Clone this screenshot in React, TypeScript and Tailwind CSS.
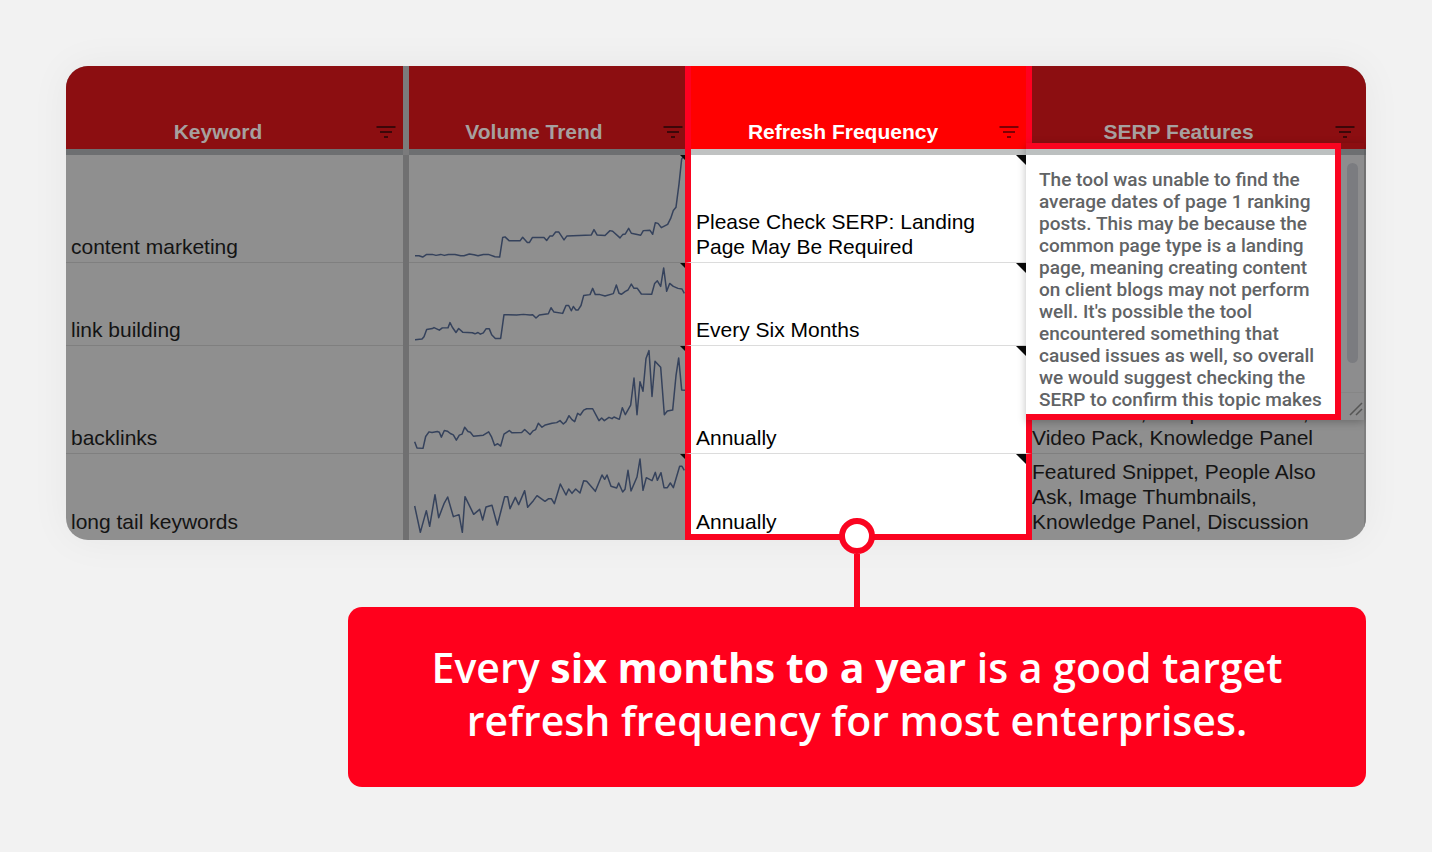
import React from 'react';
import { clsx } from 'clsx';

interface KeywordRow {
  keyword: string;
  refresh: string;
  features: string;
  height: string;
  viewBox: string;
  trend: string;
}

const rows: KeywordRow[] = [
  {
    keyword: 'content marketing',
    refresh: 'Please Check SERP: Landing Page May Be Required',
    features: '',
    height: 'h-[108px]',
    viewBox: '27 30 828 324',
    trend:
      '45,335 57,335 68,339 80,331 97,331 108,334 122,331 133,334 145,331 165,331 182,335 192,335 208,330 222,332 234,335 250,331 265,331 285,338 299,339 308,280 315,278 328,290 360,290 368,279 382,295 388,295 397,280 432,280 440,289 450,275 458,275 467,263 476,263 492,287 501,275 574,272 582,256 591,272 615,274 630,259 638,261 660,281 668,271 676,269 686,252 694,267 722,273 730,259 750,258 758,270 766,235 774,237 784,250 803,240 812,222 820,198 828,188 837,118 845,42 850,36',
  },
  {
    keyword: 'link building',
    refresh: 'Every Six Months',
    features: '',
    height: 'h-[83px]',
    viewBox: '27 15 828 249',
    trend:
      '45,248 66,246 72,239 80,217 97,214 102,211 110,215 118,219 127,212 144,212 150,196 157,210 168,226 176,214 188,225 217,227 225,230 234,226 241,231 250,227 258,215 268,215 275,233 286,244 302,244 307,208 312,172 350,173 370,171 390,173 398,172 408,182 418,173 445,169 453,151 462,164 488,168 498,144 506,144 514,160 520,147 528,158 534,158 543,144 551,114 570,111 578,92 586,111 600,111 615,115 640,108 649,82 657,107 664,110 676,101 684,97 694,79 702,92 712,92 724,109 755,110 764,77 772,69 782,86 791,30 800,101 809,77 820,86 834,92 846,94 853,107',
  },
  {
    keyword: 'backlinks',
    refresh: 'Annually',
    features: 'Thumbnails, People Also Ask, Video Pack, Knowledge Panel',
    height: 'h-[108px]',
    viewBox: '27 18 828 324',
    trend:
      '44,308 51,327 69,328 77,292 87,278 96,280 112,277 118,279 124,294 133,274 142,276 151,283 160,287 169,303 178,288 186,285 194,264 204,277 211,279 220,291 250,288 266,278 275,294 284,319 293,314 302,321 312,285 328,274 336,281 365,280 374,271 390,286 399,275 407,271 415,252 426,264 436,257 456,252 470,250 480,244 490,254 498,247 507,229 516,241 524,247 533,222 541,227 551,212 560,208 578,208 589,229 597,244 605,236 613,244 627,234 636,238 642,233 658,240 667,205 676,226 692,197 702,115 711,226 720,126 729,155 738,56 747,32 756,171 765,64 782,82 793,226 802,215 818,212 828,108 836,54 845,151 855,152',
  },
  {
    keyword: 'long tail keywords',
    refresh: 'Annually',
    features: 'Featured Snippet, People Also Ask, Image Thumbnails, Knowledge Panel, Discussion',
    height: 'h-[86px]',
    viewBox: '27 27 828 258',
    trend:
      '44,183 61,262 79,197 89,244 105,149 116,218 132,176 143,156 160,215 177,209 187,262 195,155 221,208 239,193 248,225 258,186 276,181 292,240 314,155 323,155 330,191 346,157 356,179 374,137 383,187 400,167 411,152 435,169 446,161 454,161 463,176 481,117 498,150 506,132 516,145 527,132 540,144 551,107 560,109 586,139 606,90 614,103 621,90 633,124 650,129 656,114 668,141 675,133 684,76 693,138 711,96 720,42 729,136 739,98 756,107 766,82 772,106 783,83 792,128 802,128 811,114 820,128 839,64 846,64 853,76',
  },
];

const note =
  "The tool was unable to find the average dates of page 1 ranking posts. This may be because the common page type is a landing page, meaning creating content on client blogs may not perform well. It's possible the tool encountered something that caused issues as well, so overall we would suggest checking the SERP to confirm this topic makes";

interface HeaderCellProps {
  label: string;
  active?: boolean;
  spacing: string;
}

const HeaderCell: React.FC<HeaderCellProps> = ({ label, active, spacing }) => (
  <th scope="col" className={clsx('p-0 align-top', active && 'border-x-[6px] border-[#ff0020]')}>
    <div
      className={clsx(
        'flex h-[83px] items-end pb-1',
        spacing,
        active ? 'bg-[#ff0000] text-white' : 'bg-[#8c0e11] text-[#a6a09f]'
      )}
    >
      <span className="flex-1 text-center text-[21px] leading-[26px] font-bold whitespace-nowrap">{label}</span>
      <button type="button" aria-label={`Filter ${label}`} className="h-[26px] w-5">
        <svg
          viewBox="0 0 20 26"
          className={clsx('h-[26px] w-5', active ? 'stroke-[#7d0004]' : 'stroke-[#3d0709]')}
          strokeWidth="2"
        >
          <path d="M0.5 8H19.5M4 13H16M8 18H12" />
        </svg>
      </button>
    </div>
    <div className={clsx('h-1.5', active ? 'bg-[#c0c2c2]' : 'bg-[#6d6f71]')} />
  </th>
);

const NoteMark = () => (
  <svg viewBox="0 0 10 10" className="absolute top-0 right-0 size-2.5">
    <path d="M0 0H10V10Z" fill="#0a0a0a" />
  </svg>
);

const NotePopover = () => (
  <div className="absolute -top-3 right-0 -left-1.5 z-10 flex h-[277px] shadow-[0_2px_8px_rgba(0,0,0,0.25)]">
    <div className="flex-1 overflow-hidden border-y-[6px] border-r-[6px] border-[#fa0420] bg-white">
      <div className="h-1.5 bg-[#bcc0c0]" />
      <p className="pt-3.5 pr-2 pl-[13px] font-[Roboto,sans-serif] text-[19px] leading-[22px] font-medium text-[#616365]">
        {note}
      </p>
    </div>
    <div className="mt-3 flex w-[23px] flex-col bg-[#8d8d8e]">
      <div className="mx-1.5 mt-2 h-[200px] rounded-full bg-[#7b7c80]" />
      <div className="mt-[29px] border-t border-[#868686]" />
      <svg viewBox="0 0 16 16" className="mt-2 ml-auto size-4" stroke="#555" strokeWidth="1.5">
        <path d="M2 14L14 2M8 14L14 8" />
      </svg>
    </div>
  </div>
);

export default function App() {
  return (
    <main className="min-h-screen bg-[#f2f2f2] px-[66px] pt-[66px] pb-16 font-['Liberation_Sans',Arial,sans-serif]">
      <div className="overflow-hidden rounded-[22px] shadow-[0_0_40px_rgba(0,0,0,0.05)]">
        <table className="w-full table-fixed border-separate border-spacing-0 bg-[#8f8f8f] text-[21px] leading-[25px] text-[#141414]">
          <colgroup>
            <col className="w-[337px]" />
            <col className="w-[6px]" />
            <col className="w-[276px]" />
            <col className="w-[347px]" />
            <col className="w-[334px]" />
          </colgroup>
          <thead>
            <tr>
              <HeaderCell label="Keyword" spacing="gap-1.5 pr-[7px]" />
              <td className="bg-[#7b7b7c] p-0" />
              <HeaderCell label="Volume Trend" spacing="gap-1 pr-0.5" />
              <HeaderCell label="Refresh Frequency" spacing="gap-1 pr-[7px]" active />
              <HeaderCell label="SERP Features" spacing="gap-2.5 pr-[11px]" />
            </tr>
          </thead>
          <tbody>
            {rows.map((row, idx) => {
              const last = idx === rows.length - 1;
              const text = clsx('align-bottom', last ? 'pb-1.5' : 'border-b pb-[3px]');
              return (
                <tr key={row.keyword} className={row.height}>
                  <td className={clsx(text, 'border-[#7f7f7f] pt-0 pl-[5px]')}>{row.keyword}</td>
                  <td className="bg-[#707071] p-0" />
                  <td className={clsx('relative p-0 align-top', !last && 'border-b border-[#7f7f7f]')}>
                    <svg
                      viewBox={row.viewBox}
                      preserveAspectRatio="none"
                      className="absolute inset-0 size-full"
                      fill="none"
                      stroke="#35425c"
                      strokeWidth="4.5"
                      strokeLinejoin="round"
                    >
                      <polyline points={row.trend} />
                    </svg>
                    <svg viewBox="0 0 5 5" className="absolute top-0 right-0 size-[5px]">
                      <path d="M0 0H5V5Z" fill="#0a0a0a" />
                    </svg>
                  </td>
                  <td
                    className={clsx(
                      'relative border-x-[6px] border-x-[#fa0420] bg-white p-0 align-bottom text-black',
                      last ? 'border-b-[6px] border-b-[#fa0420]' : 'border-b border-b-[#dcdcdc] pb-[3px]'
                    )}
                  >
                    <NoteMark />
                    <p className="pr-8 pl-[5px]">{row.refresh}</p>
                  </td>
                  <td className={clsx(text, 'relative border-r-2 border-[#7f7f7f] pt-0 pr-5 pl-0')}>
                    {row.features}
                    {idx === 0 && <NotePopover />}
                  </td>
                </tr>
              );
            })}
          </tbody>
        </table>
      </div>

      <section className="relative mt-[67px] ml-[282px] rounded-[14px] bg-[#ff001c] px-12 pt-[34px] pb-10 text-center font-['Open_Sans',sans-serif] text-[41px] leading-[53px] font-semibold text-white">
        {/* Pin joining the callout to the highlighted column */}
        <div className="absolute bottom-full left-1/2 flex h-[89px] w-9 -translate-x-1/2 flex-col items-center">
          <div className="size-9 shrink-0 rounded-full border-[6px] border-[#fa0420] bg-white" />
          <div className="w-1.5 flex-1 bg-[#fa0420]" />
        </div>
        <p>
          Every <strong className="font-bold">six months to a year</strong> is a good target
          <br />
          refresh frequency for most enterprises.
        </p>
      </section>
    </main>
  );
}
